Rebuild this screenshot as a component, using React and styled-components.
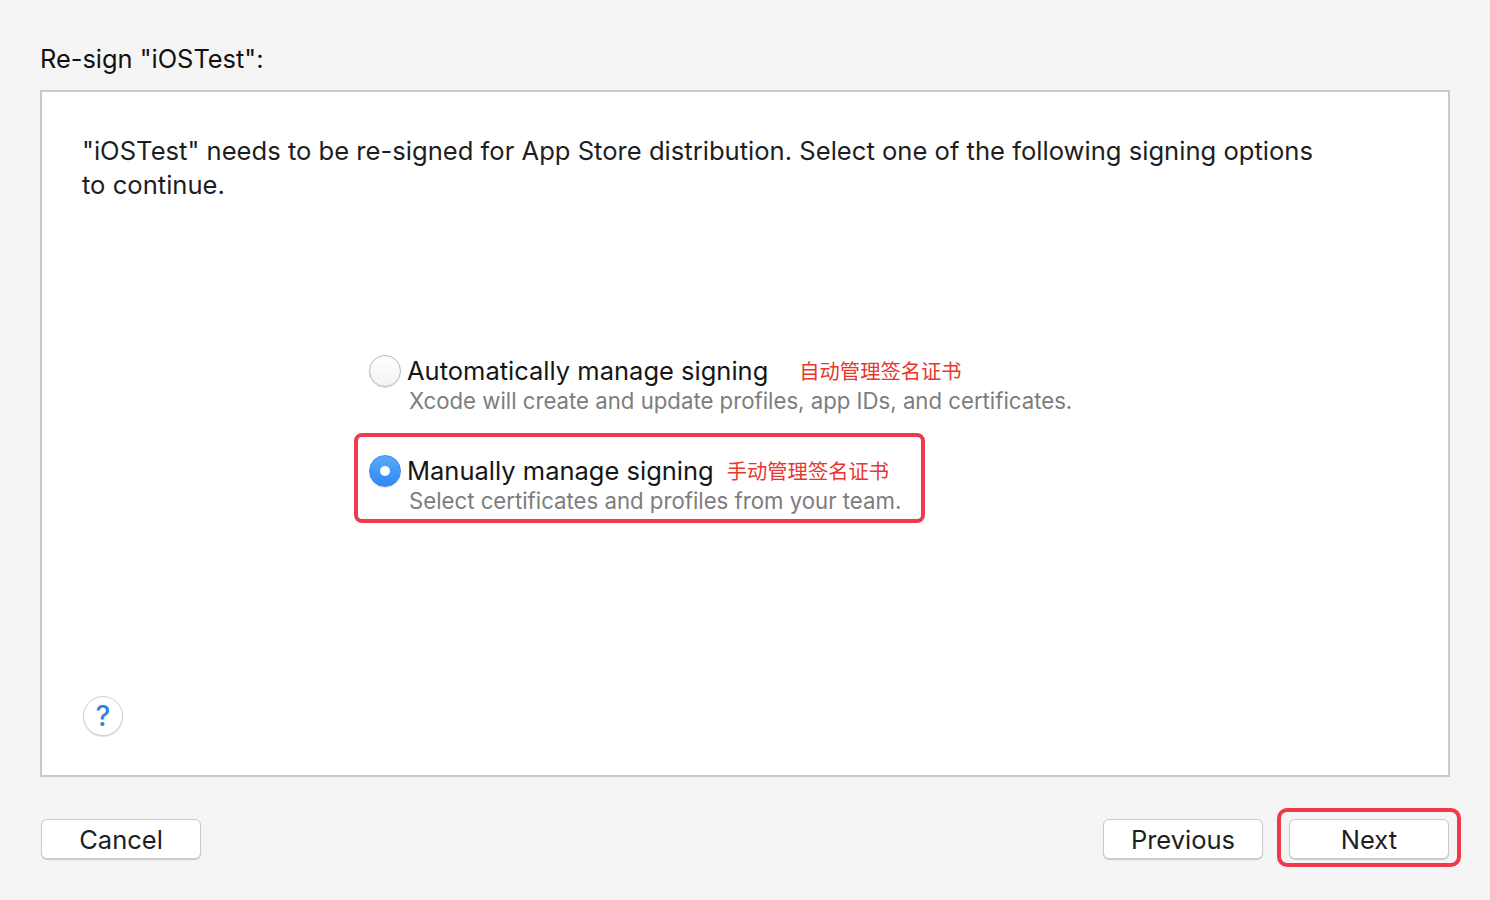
import React from "react";
import styled, { createGlobalStyle } from "styled-components";

const Global = createGlobalStyle`
  html, body { margin: 0; padding: 0; background: #f5f5f5; }
  body { font-family: Inter, "Noto Sans CJK SC", sans-serif; color: #222; -webkit-font-smoothing: antialiased; }
`;

const Page = styled.div`
  width: 1490px;
  height: 900px;
  box-sizing: border-box;
  padding: 40px 40px 0 40px;
  display: flex;
  flex-direction: column;
`;

const Title = styled.div`
  font-size: 25.4px;
  line-height: 38px;
  color: #111;
  height: 38px;
  margin-bottom: 12px;
`;

const Panel = styled.div`
  box-sizing: border-box;
  height: 687px;
  background: #fff;
  border: 2px solid #c9c9c9;
  padding: 42px 40px 39px 40px;
  display: flex;
  flex-direction: column;
`;

const Message = styled.p`
  margin: 0;
  font-size: 25.6px;
  line-height: 34px;
  max-width: 1260px;
  color: #1e1e1e;
`;

const Options = styled.div`
  margin-top: 131px;
  margin-left: 272px;
  display: flex;
  flex-direction: column;
  align-items: flex-start;
  gap: 10px;
`;

const Option = styled.div`
  border: 4px solid ${(p) => (p.$highlight ? "#ee3b4b" : "transparent")};
  border-radius: 8px;
  padding: 18px 20px 4px 11px;
  display: grid;
  grid-template-columns: 32px auto;
  column-gap: 6px;
  align-items: center;
`;

const Radio = styled.span`
  width: 32px;
  height: 32px;
  border-radius: 50%;
  box-sizing: border-box;
  display: flex;
  align-items: center;
  justify-content: center;
  background: ${(p) => (p.$checked ? "linear-gradient(#5aa9fb, #2f88f3)" : "linear-gradient(#ffffff, #f3f3f3)")};
  border: 1px solid ${(p) => (p.$checked ? "#3a8ef0" : "#b9b9b9")};
  box-shadow: 0 1px 1px rgba(0, 0, 0, 0.12);
  &::after {
    content: "";
    display: ${(p) => (p.$checked ? "block" : "none")};
    width: 10px;
    height: 10px;
    border-radius: 50%;
    background: #fff;
  }
`;

const LabelRow = styled.div`
  display: flex;
  align-items: center;
`;

const Label = styled.span`
  font-size: 25.5px;
  line-height: 32px;
  color: #161616;
`;

const Note = styled.span`
  font-family: "Noto Sans CJK SC", sans-serif;
  font-size: 20.3px;
  line-height: 28px;
  color: #e8372f;
  margin-left: ${(p) => p.$gap}px;
  position: relative;
  top: -1px;
`;

const Desc = styled.div`
  grid-column: 2;
  font-size: 22.2px;
  line-height: 28px;
  color: #7d7d7d;
  padding-left: 2px;
`;

const HelpButton = styled.button`
  margin-top: auto;
  margin-left: 1px;
  width: 40px;
  height: 40px;
  border-radius: 50%;
  background: #fff;
  border: 1px solid #d0d0d0;
  box-shadow: 0 1px 1px rgba(0, 0, 0, 0.12);
  color: #2f7fe6;
  font-family: Inter, sans-serif;
  font-size: 28px;
  font-weight: 500;
  padding: 0;
  display: flex;
  align-items: center;
  justify-content: center;
`;

const Footer = styled.div`
  margin-top: 42px;
  padding: 0 1px;
  display: flex;
  align-items: center;
`;

const Button = styled.button`
  width: 160px;
  height: 40px;
  box-sizing: border-box;
  background: #fff;
  border: 1px solid #cacaca;
  border-radius: 6px;
  box-shadow: 0 1px 1px rgba(0, 0, 0, 0.18);
  font-family: Inter, sans-serif;
  font-size: 25.5px;
  color: #1e1e1e;
  padding: 0;
`;

const Spacer = styled.div`
  flex: 1;
`;

const Highlighted = styled.div`
  position: relative;
  margin-left: 26px;
  display: flex;
  &::after {
    content: "";
    position: absolute;
    left: -12px;
    right: -12px;
    top: -11px;
    bottom: -8px;
    border: 4px solid #ee3b4b;
    border-radius: 10px;
    pointer-events: none;
  }
`;

export default function App() {
  return (
    <>
      <Global />
      <Page>
        <Title>Re-sign "iOSTest":</Title>
        <Panel>
          <Message>
            "iOSTest" needs to be re-signed for App Store distribution. Select one of the following signing options to continue.
          </Message>
          <Options>
            <Option>
              <Radio />
              <LabelRow>
                <Label>Automatically manage signing</Label>
                <Note $gap={31}>自动管理签名证书</Note>
              </LabelRow>
              <Desc>Xcode will create and update profiles, app IDs, and certificates.</Desc>
            </Option>
            <Option $highlight>
              <Radio $checked />
              <LabelRow>
                <Label>Manually manage signing</Label>
                <Note $gap={13}>手动管理签名证书</Note>
              </LabelRow>
              <Desc>Select certificates and profiles from your team.</Desc>
            </Option>
          </Options>
          <HelpButton>?</HelpButton>
        </Panel>
        <Footer>
          <Button>Cancel</Button>
          <Spacer />
          <Button>Previous</Button>
          <Highlighted>
            <Button>Next</Button>
          </Highlighted>
        </Footer>
      </Page>
    </>
  );
}
